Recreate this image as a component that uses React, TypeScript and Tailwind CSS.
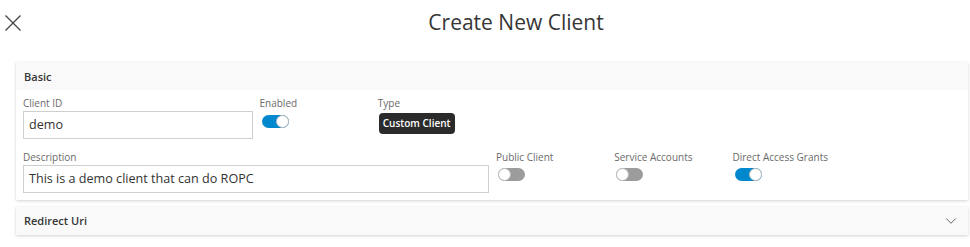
import { ChevronDown } from "lucide-react"

function Toggle({ on }: { on: boolean }) {
  return (
    <div
      className={
        on
          ? "flex h-[13px] w-[27px] items-center justify-end rounded-full bg-[#0088ce]"
          : "flex h-[13px] w-[27px] items-center justify-start rounded-full bg-[#9c9c9c]"
      }
    >
      <div className="h-[13px] w-[13px] rounded-full border border-[#bbbbbb] bg-white" />
    </div>
  )
}

function Label({ children }: { children: string }) {
  return <div className="h-[12px] text-[10px] leading-[12px] text-[#6a6a6a]">{children}</div>
}

export default function App() {
  return (
    <main
      className="h-[247px] w-[970px] bg-white text-[#333333]"
      style={{ fontFamily: '"Open Sans", "Noto Sans", sans-serif' }}
    >
      <div className="relative flex h-[62px] items-start justify-center pt-[8px]">
        <button type="button" className="absolute left-[5px] top-[15px] text-[#444444]">
          <svg width="16" height="16" viewBox="0 0 16 16" fill="none" stroke="currentColor" strokeWidth="1.3">
            <path d="M0.5 0.5 15.5 15.5M15.5 0.5 0.5 15.5" />
          </svg>
        </button>
        <h1 className="ml-[62px] text-[21px] leading-[28px] text-[#363636]">Create New Client</h1>
      </div>

      <div className="ml-[16px] w-[952px] bg-white shadow-[0_1px_3px_rgba(0,0,0,0.18)]">
        <div className="flex h-[28px] items-center bg-[#f9f9f9] px-[8px] pt-[2px] text-[11px] font-semibold text-[#363636]">
          Basic
        </div>
        <div className="grid grid-cols-[repeat(8,118.25px)] gap-y-[12px] pb-[7px] pl-[7px] pt-[7px]">
          <div className="col-span-2 pr-[7px]">
            <Label>Client ID</Label>
            <div className="mt-[2px] flex h-[28px] items-center border border-[#cfcfcf] px-[5px] text-[12.6px]">
              demo
            </div>
          </div>
          <div>
            <Label>Enabled</Label>
            <div className="ml-[2px] mt-[6px]">
              <Toggle on />
            </div>
          </div>
          <div className="col-span-5">
            <Label>Type</Label>
            <div className="ml-[1px] mt-[4px] inline-flex h-[21px] items-center rounded-[4px] bg-[#2b2b2b] px-[4px] text-[10px] font-semibold text-white">
              Custom Client
            </div>
          </div>

          <div className="col-span-4 pr-[7px]">
            <Label>Description</Label>
            <div className="mt-[2px] flex h-[28px] items-center border border-[#cfcfcf] px-[5px] text-[12.6px]">
              This is a demo client that can do ROPC
            </div>
          </div>
          <div>
            <Label>Public Client</Label>
            <div className="ml-[2px] mt-[5px]">
              <Toggle on={false} />
            </div>
          </div>
          <div>
            <Label>Service Accounts</Label>
            <div className="ml-[2px] mt-[5px]">
              <Toggle on={false} />
            </div>
          </div>
          <div className="col-span-2">
            <Label>Direct Access Grants</Label>
            <div className="ml-[2px] mt-[5px]">
              <Toggle on />
            </div>
          </div>
        </div>
      </div>

      <div className="ml-[16px] mt-[7px] flex h-[28px] w-[952px] items-center justify-between bg-[#f9f9f9] px-[8px] text-[11px] font-semibold text-[#363636] shadow-[0_1px_3px_rgba(0,0,0,0.18)]">
        <span>Redirect Uri</span>
        <ChevronDown size={18} strokeWidth={1.2} className="text-[#555555]" />
      </div>
    </main>
  )
}
